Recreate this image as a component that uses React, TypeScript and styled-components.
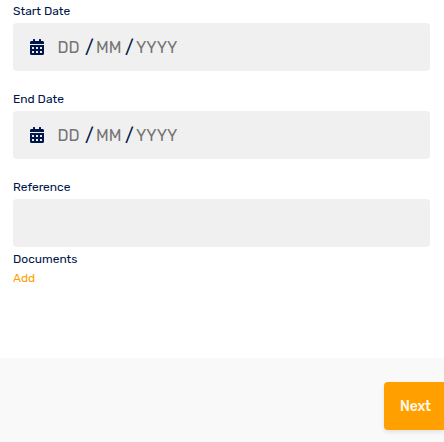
import React from "react";
import styled, { createGlobalStyle } from "styled-components";
import { FaCalendarAlt } from "react-icons/fa";

const GlobalStyle = createGlobalStyle`
  * { box-sizing: border-box; }
  body {
    margin: 0;
    background: #fff;
    color: #001549;
    font-family: Rubik, Roboto, "Liberation Sans", sans-serif;
    overflow: hidden;
  }
`;

const Page = styled.main`
  height: 442px;
  display: flex;
  flex-direction: column;
`;

const Form = styled.form`
  height: 358px;
  padding: 1px 14px 0 13px;
`;

const Field = styled.div<{ $gap?: number }>`
  margin-bottom: ${({ $gap = 18 }) => $gap}px;
`;

const Label = styled.label`
  display: block;
  height: 22px;
  line-height: 20px;
  font-size: 12px;
`;

const InputBox = styled.div`
  height: 48px;
  border-radius: 4px;
  background: #f0f0f0;
  display: flex;
  align-items: center;
  padding-left: 17px;
`;

const CalendarIcon = styled(FaCalendarAlt)`
  width: 14px;
  height: 16px;
  margin-right: 13.5px;
`;

const DatePart = styled.span<{ $width: number }>`
  width: ${({ $width }) => $width}px;
  padding-top: 2px;
  font-size: 16px;
  line-height: 20px;
  color: #757575;
  white-space: nowrap;
`;

const Slash = styled.span`
  width: 11px;
  font-size: 18px;
  line-height: 24px;
`;

const TextInput = styled.input`
  display: block;
  width: 100%;
  height: 48px;
  border: 0;
  border-radius: 4px;
  background: #f0f0f0;
`;

const SectionTitle = styled.div`
  height: 20px;
  line-height: 20px;
  font-size: 12px;
`;

const AddLink = styled.a`
  display: block;
  line-height: 18px;
  font-size: 12px;
  color: #ffa000;
`;

const Footer = styled.footer`
  flex: 1;
  display: flex;
  justify-content: flex-end;
  padding-top: 24px;
  background: #f9f9f9;
`;

const NextButton = styled.button`
  width: 60px;
  height: 48px;
  padding: 0 0 0 16px;
  border: 0;
  border-radius: 4px 0 0 4px;
  background: #ffa000;
  box-shadow: 0 2px 5px rgba(0, 0, 0, 0.1);
  color: #fff8e9;
  font-family: inherit;
  font-size: 14px;
  font-weight: 500;
  letter-spacing: -0.2px;
  text-align: left;
`;

const DateField = ({ label }: { label: string }) => (
  <Field>
    <Label>{label}</Label>
    <InputBox>
      <CalendarIcon />
      <DatePart $width={27.5}>DD</DatePart>
      <Slash>/</Slash>
      <DatePart $width={29}>MM</DatePart>
      <Slash>/</Slash>
      <DatePart $width={45}>YYYY</DatePart>
    </InputBox>
  </Field>
);

export default function App() {
  return (
    <>
      <GlobalStyle />
      <Page>
        <Form>
          <DateField label="Start Date" />
          <DateField label="End Date" />
          <Field $gap={2}>
            <Label htmlFor="reference">Reference</Label>
            <TextInput id="reference" />
          </Field>
          <SectionTitle>Documents</SectionTitle>
          <AddLink>Add</AddLink>
        </Form>
        <Footer>
          <NextButton type="button">Next</NextButton>
        </Footer>
      </Page>
    </>
  );
}
